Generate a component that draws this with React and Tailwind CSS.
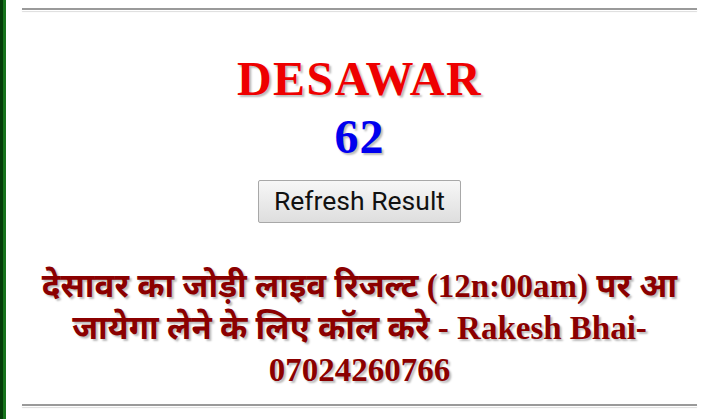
export default function App() {
  return (
    <div className="flex h-[419px] w-[713px] overflow-hidden bg-white">
      <div className="w-[3px] shrink-0 bg-[#053d0a]" />
      <div className="w-[3px] shrink-0 bg-[#16731c]" />
      <div className="flex min-w-0 flex-1 flex-col px-[16px] pt-[8px]">
        <div className="h-[3px] border-t-2 border-[#9a9a9a] shadow-[0_1px_1px_#ddd]" />
        <div className="flex flex-col items-center pt-[43px]">
          <div
            className="text-[48px] font-bold leading-[50px] tracking-[1.5px] text-[#ee0000] [text-shadow:2px_2px_2px_#bbb]"
            style={{ fontFamily: '"Liberation Serif", "DejaVu Serif", serif' }}
          >
            DESAWAR
          </div>
          <div
            className="mt-[8px] text-[48px] font-bold leading-[50px] tracking-[1px] text-[#0000ee] [text-shadow:2px_2px_2px_#bbb]"
            style={{ fontFamily: '"Liberation Serif", "DejaVu Serif", serif' }}
          >
            62
          </div>
          <button
            className="mt-[18px] h-[43px] w-[203px] rounded-[2px] border border-[#a8a8a8] bg-gradient-to-b from-[#f7f7f7] to-[#dedede] text-[26.5px] leading-none text-[#111]"
            style={{ fontFamily: 'Roboto, "Liberation Sans", sans-serif' }}
          >
            Refresh Result
          </button>
          <div
            className="mt-[42px] w-full text-center text-[33px] font-bold leading-[42px] text-[#8b0000] [text-shadow:2px_2px_2px_#bbb]"
            style={{ fontFamily: '"Liberation Serif", "Noto Sans Devanagari", "Noto Serif Devanagari", serif' }}
          >
            देसावर का जोड़ी लाइव रिजल्ट (12n:00am) पर आ जायेगा लेने के लिए कॉल करे - Rakesh Bhai-07024260766
          </div>
        </div>
        <div className="mt-[13px] h-[3px] border-t-2 border-[#9a9a9a] shadow-[0_1px_1px_#ddd]" />
      </div>
    </div>
  );
}
